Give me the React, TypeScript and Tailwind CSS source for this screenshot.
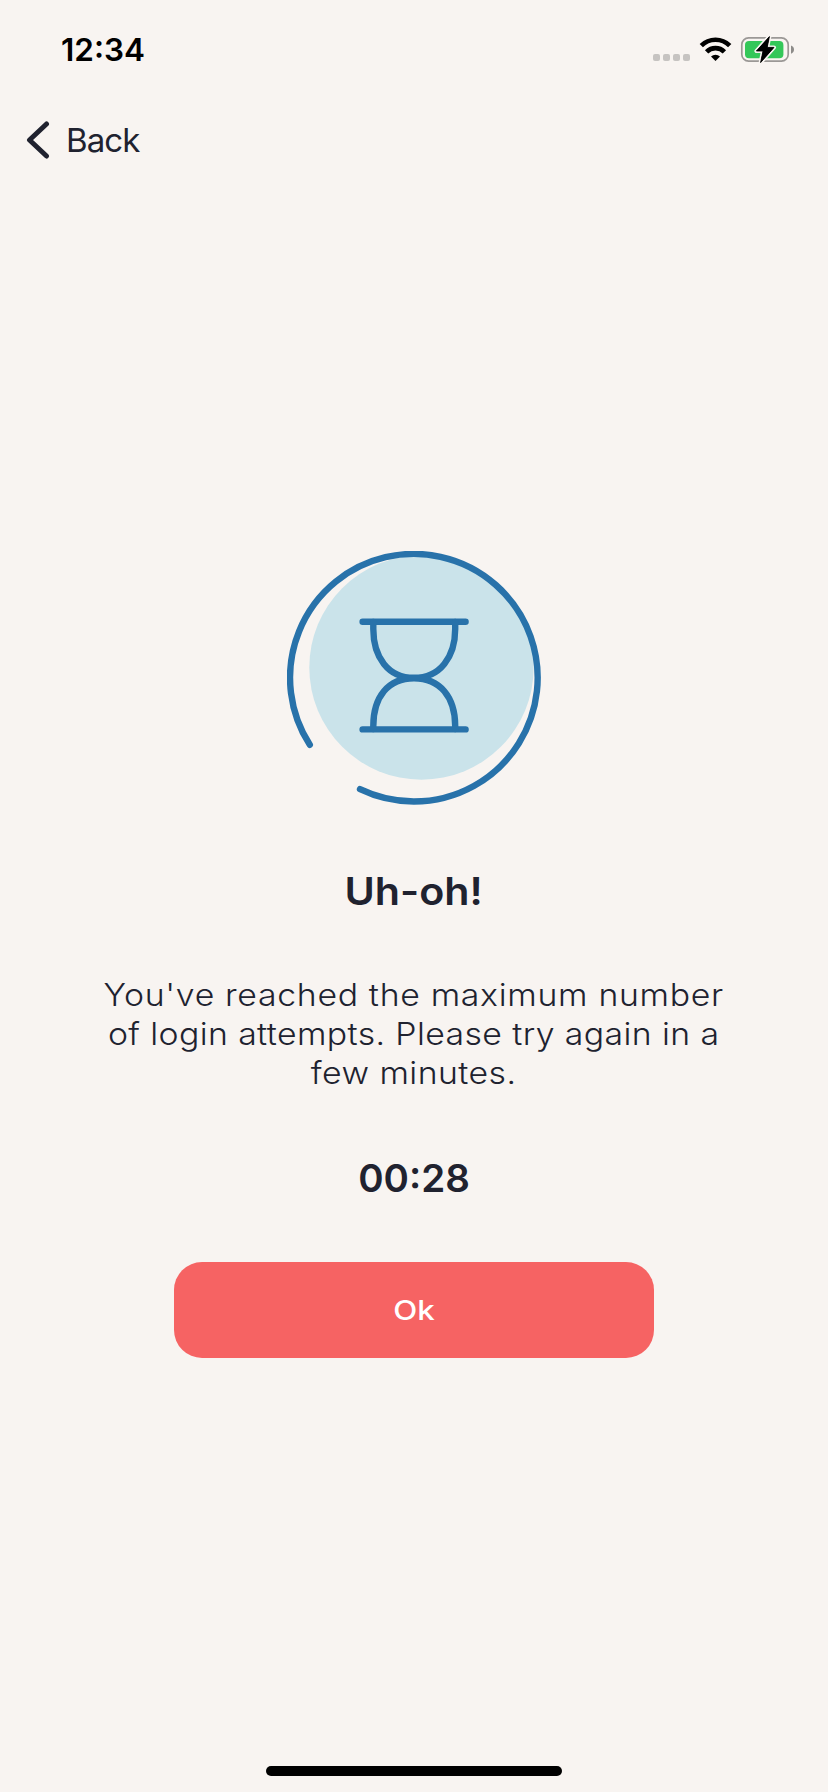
const message = [
  { text: "You've reached the maximum number", spacing: 'tracking-[0.63px]' },
  { text: 'of login attempts. Please try again in a', spacing: 'tracking-[0.36px]' },
  { text: 'few minutes.', spacing: 'tracking-[0.4px]' },
];

function StatusIcons() {
  return (
    <svg className="h-[60px] w-[198px]" viewBox="0 0 198 60" fill="none">
      <g fill="#c6c3c1">
        <rect x="23" y="34" width="7" height="7" rx="2" />
        <rect x="33" y="34" width="7" height="7" rx="2" />
        <rect x="43" y="34" width="7" height="7" rx="2" />
        <rect x="53" y="34" width="7" height="7" rx="2" />
      </g>
      <g stroke="#000" strokeWidth="4.7">
        <path d="M71.3 25.6a20.2 20.2 0 0 1 28.4 0" />
        <path d="M76.6 31.8a12.6 12.6 0 0 1 17.8 0" />
      </g>
      <path d="M85.5 41l-4.5-4.4a6.6 6.6 0 0 1 9 0z" fill="#000" />
      <rect x="111.8" y="17.8" width="46.4" height="23.4" rx="6.8" stroke="#9b9896" strokeWidth="1.7" />
      <path d="M161 25.5c4 1.2 4 7 0 8.2z" fill="#8d8b89" />
      <rect x="115" y="21" width="38.4" height="17.2" rx="4" fill="#34c759" />
      <path
        d="M139.4 16.6L126.4 31h6.6l-2.4 11.6 13.4-15.2h-6.8z"
        fill="#000"
        stroke="#f8f4f1"
        strokeWidth="4"
        strokeLinejoin="round"
        paintOrder="stroke"
      />
      <path
        d="M139.4 16.6L126.4 31h6.6l-2.4 11.6 13.4-15.2h-6.8z"
        fill="#000"
        stroke="#000"
        strokeWidth="0.8"
        strokeLinejoin="round"
      />
    </svg>
  );
}

function Hourglass() {
  return (
    <svg className="mt-[378px] h-[254px] w-[254px] shrink-0" viewBox="287 551 254 254" fill="none">
      <circle cx="421.5" cy="667.5" r="112.2" fill="#cae3ea" />
      <g stroke="#2872aa" strokeWidth="6.4" strokeLinecap="round">
        <path d="M309.8 744.8A123.8 123.8 0 1 1 360 789.2" />
        <path d="M362.6 621.7H465.6M362.6 729.4H465.6" />
        <path d="M373.3 622V629C373.3 657 388 677.8 414 677.8S455.2 657 455.2 629V622" />
        <path d="M373.3 729V726C373.3 697 388 678.2 414 678.2S455.2 697 455.2 726V729" />
      </g>
    </svg>
  );
}

export default function App() {
  return (
    <div className="flex h-[1792px] w-[828px] flex-col items-center bg-[#f8f4f1] font-['Inter',sans-serif] text-[#20222f]">
      <header className="flex h-20 w-full shrink-0 items-start justify-between">
        <span className="mt-[30px] ml-[61px] text-[31.5px] leading-10 font-semibold text-black">12:34</span>
        <div className="mt-5">
          <StatusIcons />
        </div>
      </header>
      <nav className="mt-10 flex h-10 w-full shrink-0 items-center pl-[26px]">
        <button className="flex items-center">
          <svg className="h-10 w-6" viewBox="0 0 24 40" fill="none">
            <path d="M20.5 4L3.5 20L20.5 36" stroke="#20222f" strokeWidth="5" strokeLinecap="round" strokeLinejoin="round" />
          </svg>
          <span className="ml-4 text-[33px] leading-10 tracking-[-0.9px]">Back</span>
        </button>
      </nav>
      <main className="mt-[13px] flex w-full flex-col items-center">
        <Hourglass />
        <h1 className="mt-[62px] scale-x-[1.07] text-[38.5px] leading-[48px] font-semibold">Uh-oh!</h1>
        <p className="mt-[60px] flex scale-x-[1.09] flex-col items-center text-[31px] leading-[39px] font-light">
          {message.map((line) => (
            <span key={line.text} className={`whitespace-nowrap ${line.spacing}`}>
              {line.text}
            </span>
          ))}
        </p>
        <div className="mt-[62px] text-[38.5px] leading-[48px] font-semibold">00:28</div>
        <button className="mt-[60px] h-24 w-[480px] rounded-[28px] bg-[#f66363] pt-[3px] text-[27px] font-medium text-white">
          <span className="inline-block scale-x-[1.16]">Ok</span>
        </button>
      </main>
      <div className="mt-auto mb-4 h-[10px] w-[296px] shrink-0 rounded-full bg-black" />
    </div>
  );
}
